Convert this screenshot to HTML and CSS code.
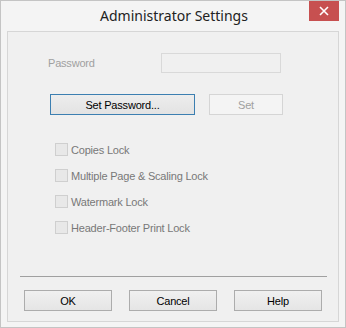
FILE: index.html
```html
<!DOCTYPE html>
<html>
<head>
<meta charset="utf-8">
<link rel="stylesheet" href="styles.css">
</head>
<body>
<div class="window">
  <div class="titlebar">
    <span></span>
    <div class="title">Administrator Settings</div>
    <div class="close">
      <svg width="10" height="10" viewBox="0 0 10 10"><path d="M1 1L9 9M9 1L1 9" stroke="#fff" stroke-width="1.6" fill="none"/></svg>
    </div>
  </div>
  <div class="client">
    <div class="pw-row">
      <span class="pw-label">Password</span>
      <div class="input"></div>
    </div>
    <div class="btn-row">
      <div class="btn default wide">Set Password...</div>
      <div class="btn disabled small">Set</div>
    </div>
    <div class="checks">
      <div class="check"><span class="box"></span><span>Copies Lock</span></div>
      <div class="check"><span class="box"></span><span>Multiple Page &amp; Scaling Lock</span></div>
      <div class="check"><span class="box"></span><span>Watermark Lock</span></div>
      <div class="check"><span class="box"></span><span>Header-Footer Print Lock</span></div>
    </div>
    <div class="sep"></div>
    <div class="footer">
      <div class="btn fbtn ok">OK</div>
      <div class="btn fbtn">Cancel</div>
      <div class="btn fbtn">Help</div>
    </div>
  </div>
</div>
</body>
</html>
```
FILE: styles.css
```css
* { box-sizing: border-box; }
html, body { margin: 0; padding: 0; background: #f4f4f4; }
.window {
  width: 346px;
  height: 328px;
  border: 1px solid #c4c4c4;
  background: #f4f4f4;
  display: flex;
  flex-direction: column;
  font-family: "Liberation Sans", Arial, sans-serif;
  font-size: 11px;
  letter-spacing: -0.2px;
}
.titlebar {
  height: 30px;
  display: grid;
  grid-template-columns: 1fr auto 1fr;
  align-items: start;
}
.title {
  font-family: "Noto Sans", "Open Sans", sans-serif;
  font-size: 14px;
  letter-spacing: 0;
  color: #222;
  line-height: 30px;
  height: 30px;
  padding-left: 2px;
}
.close {
  justify-self: end;
  margin-right: 6px;
  width: 30px;
  height: 20px;
  background: #c75050;
  display: flex;
  align-items: center;
  justify-content: center;
}
.close svg { display: block; }
.client {
  margin: 0 6px 5px 6px;
  height: 291px;
  border: 1px solid #d6d6d6;
  background: #f0f0f0;
  display: flex;
  flex-direction: column;
}
.pw-row {
  margin-top: 21px;
  padding-left: 40px;
  display: grid;
  grid-template-columns: 113px 120px;
  align-items: center;
  height: 20px;
}
.pw-label { color: #a0a0a0; }
.input {
  height: 20px;
  border: 1px solid #d9d9d9;
  background: #f0f0f0;
}
.btn-row {
  margin-top: 21px;
  padding-left: 42px;
  display: flex;
  gap: 14px;
}
.btn {
  height: 21px;
  display: flex;
  align-items: center;
  justify-content: center;
  border: 1px solid #acacac;
  background: linear-gradient(#f0f0f0, #e5e5e5);
  color: #000;
}
.btn.default { border-color: #3c7fb1; background: linear-gradient(#ededed, #e3e3e3); }
.btn.wide { width: 145px; }
.btn.small { width: 74px; }
.btn.disabled { border-color: #d5d5d5; background: #f4f4f4; color: #a0a0a0; }
.checks {
  margin-top: 28px;
  padding-left: 47px;
  display: flex;
  flex-direction: column;
  gap: 13px;
}
.check {
  height: 13px;
  display: flex;
  align-items: center;
  gap: 3px;
  color: #787878;
}
.box {
  width: 13px;
  height: 13px;
  border: 1px solid #cfcfcf;
  background: #e8e8e8;
}
.sep {
  margin: 42px 11px 0 12px;
  height: 1px;
  background: #a0a0a0;
}
.footer {
  margin-top: 13px;
  padding-left: 16px;
  display: flex;
  gap: 17px;
}
.fbtn { width: 88px; }
```
